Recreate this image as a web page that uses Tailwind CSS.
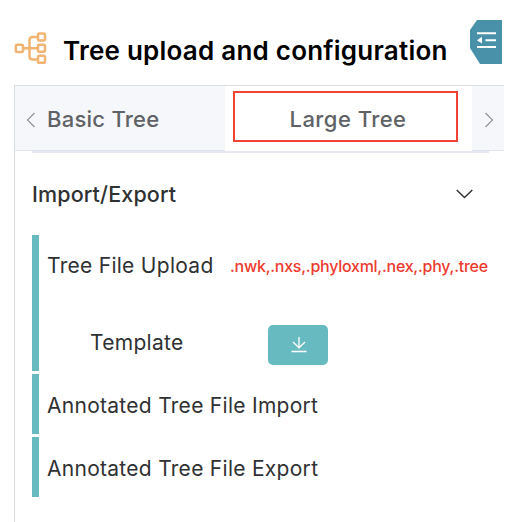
<!DOCTYPE html>
<html lang="en">
<head>
<meta charset="utf-8">
<title>Tree upload and configuration</title>
<script src="https://cdn.jsdelivr.net/npm/@tailwindcss/browser@4"></script>
</head>
<body class="w-[510px] h-[522px] overflow-hidden bg-white font-['Inter','Liberation_Sans',sans-serif] text-[#303133] whitespace-nowrap">
<header class="flex h-[85px] items-start pl-[14px]">
  <svg class="mt-[32px] h-[33px] w-[34px]" viewBox="0 0 34 33" fill="none" stroke="#f2b472" stroke-width="2.5">
    <rect x="1.8" y="12.7" width="7.2" height="7.2" rx="1.4"/>
    <rect x="24" y="1.5" width="7" height="7" rx="1.4"/>
    <rect x="24" y="12.7" width="7" height="7" rx="1.4"/>
    <rect x="24" y="23.8" width="7" height="7" rx="1.4"/>
    <path d="M9 16.3h15M24 5.1h-5.2q-3.3 0-3.3 3.3v15.800q0 3.300 3.300 3.300H24"/>
  </svg>
  <h1 class="ml-[15px] mt-[31px] w-[391px] text-[26px] leading-[40px] font-semibold tracking-[0.23px] text-black"><span>Tree upload and configuration</span></h1>
  <svg class="ml-[16px] mt-[20px] h-[44px] w-[32px]" viewBox="0 0 32 44">
    <path d="M7 0h25v44H10L0 28V10z" fill="#4891a8"/>
    <path d="M7 13.200h19M15.500 20.200H26M7 27h19" stroke="#fff" stroke-width="2"/>
    <path d="M7 20.200l5-3.400v6.800z" fill="#fff"/>
  </svg>
</header>
<main class="ml-[14px] h-[437px] w-[490px] border-l border-t border-[#d9dde4]">
  <nav class="flex h-[65px] text-[22px] font-medium text-[#606266]">
    <div class="flex w-[210px] items-center border-b border-[#dfe3ec] bg-[#f5f7fb]">
      <svg class="ml-[11px] mt-[3px] h-[16px] w-[10px]" viewBox="0 0 10 16" fill="none" stroke="#929499" stroke-width="1.200"><path d="M8.500 1L1.500 8l7 7"/></svg>
      <span class="ml-[11px] mt-[3px] tracking-[0.25px]">Basic Tree</span>
    </div>
    <div class="w-[247px] pl-[8px] pt-[5px]">
      <div class="flex h-[51px] w-[225px] items-center justify-center border-2 border-[#ee4335] pl-[5px]"><span class="mt-[5px] tracking-[0.45px]">Large Tree</span></div>
    </div>
    <div class="flex flex-1 items-center border-b border-[#dfe3ec] bg-[#f5f7fb] pl-[12px]">
      <svg class="mt-[3px] h-[16px] w-[10px]" viewBox="0 0 10 16" fill="none" stroke="#929499" stroke-width="1.200"><path d="M1.500 1l7 7-7 7"/></svg>
    </div>
  </nav>
  <div class="ml-[17px] h-[2px] w-[457px] bg-[#e7eaf2]"></div>
  <section class="pl-[17px]">
    <div class="flex h-[82px] items-center justify-between pr-[31px]">
      <h2 class="text-[21.500px] font-medium tracking-[0.14px]"><span>Import/Export</span></h2>
      <svg class="h-[10px] w-[17px]" viewBox="0 0 17 10" fill="none" stroke="#303133" stroke-width="1.400"><path d="M.7 1l7.800 7.500L16.300 1"/></svg>
    </div>
    <div class="flex flex-col gap-[3px] text-[21px] tracking-[0.28px]">
      <div class="h-[136px] border-l-[7px] border-[#67bbc0] pl-[8px]">
        <div class="flex h-[61px] items-center"><span class="w-[183px]">Tree File Upload</span><span class="text-[16px] font-medium tracking-[-0.26px] text-[#ed3a2e]">.nwk,.nxs,.phyloxml,.nex,.phy,.tree</span></div>
        <div class="mt-[28px] flex h-[41px] items-center pl-[43px]">
          <span class="w-[178px] -mt-[4px]">Template</span>
          <button class="flex h-[40px] w-[60px] items-center justify-center rounded-[5px] bg-[#67bbc0]"><svg class="ml-[2px] h-[17px] w-[16px]" viewBox="0 0 16 17" fill="none" stroke="#fff" stroke-width="1.300"><path d="M8 1v10.800M2 6l6 5.800L14 6M.5 15.500h15"/></svg></button>
        </div>
      </div>
      <div class="flex h-[60px] items-center border-l-[7px] border-[#67bbc0] pt-[3px] pl-[8px]"><span>Annotated Tree File Import</span></div>
      <div class="flex h-[60px] items-center border-l-[7px] border-[#67bbc0] pt-[3px] pl-[8px]"><span>Annotated Tree File Export</span></div>
    </div>
  </section>
</main>
</body>
</html>
